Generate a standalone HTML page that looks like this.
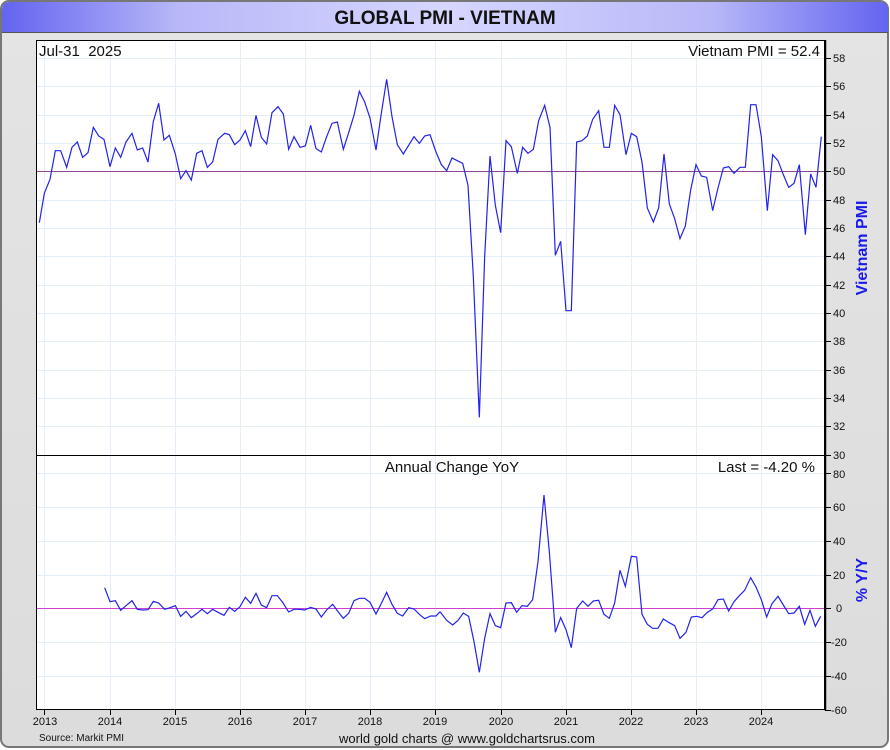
<!DOCTYPE html>
<html><head><meta charset="utf-8"><style>
html,body{margin:0;padding:0;width:890px;height:750px;overflow:hidden;background:#fff;}
</style></head><body>
<svg width="890" height="750" xmlns="http://www.w3.org/2000/svg" font-family="Liberation Sans, sans-serif">
<defs>
<linearGradient id="hd" x1="0" x2="1" y1="0" y2="0">
<stop offset="0" stop-color="#6464f0"/><stop offset="0.2" stop-color="#b8b8f8"/><stop offset="0.5" stop-color="#d6d6ff"/><stop offset="0.8" stop-color="#b8b8f8"/><stop offset="1" stop-color="#6464f0"/>
</linearGradient>
<linearGradient id="bg" x1="0" x2="0" y1="0" y2="1">
<stop offset="0" stop-color="#e4e4e4"/><stop offset="1" stop-color="#dcdcdc"/>
</linearGradient>
</defs>
<rect x="1" y="1" width="887" height="746" rx="8" fill="url(#bg)" stroke="#777" stroke-width="2"/>
<path d="M2 32 V10 Q2 2 10 2 H880 Q888 2 888 10 V32 Z" fill="url(#hd)"/>
<line x1="2" y1="32.5" x2="888" y2="32.5" stroke="#555"/>
<text x="445" y="24" text-anchor="middle" font-size="19" font-weight="bold" fill="#111">GLOBAL PMI - VIETNAM</text>
<rect x="36" y="40" width="789" height="670" fill="#fff"/>
<g stroke="#e4eef8" stroke-width="1">
<line x1="44.5" y1="40" x2="44.5" y2="710"/><line x1="110.5" y1="40" x2="110.5" y2="710"/><line x1="175.5" y1="40" x2="175.5" y2="710"/><line x1="240.5" y1="40" x2="240.5" y2="710"/><line x1="305.5" y1="40" x2="305.5" y2="710"/><line x1="370.5" y1="40" x2="370.5" y2="710"/><line x1="435.5" y1="40" x2="435.5" y2="710"/><line x1="501.5" y1="40" x2="501.5" y2="710"/><line x1="566.5" y1="40" x2="566.5" y2="710"/><line x1="631.5" y1="40" x2="631.5" y2="710"/><line x1="696.5" y1="40" x2="696.5" y2="710"/><line x1="761.5" y1="40" x2="761.5" y2="710"/>
<line x1="36" y1="58.5" x2="825" y2="58.5"/><line x1="36" y1="86.5" x2="825" y2="86.5"/><line x1="36" y1="115.5" x2="825" y2="115.5"/><line x1="36" y1="143.5" x2="825" y2="143.5"/><line x1="36" y1="200.5" x2="825" y2="200.5"/><line x1="36" y1="228.5" x2="825" y2="228.5"/><line x1="36" y1="256.5" x2="825" y2="256.5"/><line x1="36" y1="285.5" x2="825" y2="285.5"/><line x1="36" y1="313.5" x2="825" y2="313.5"/><line x1="36" y1="341.5" x2="825" y2="341.5"/><line x1="36" y1="370.5" x2="825" y2="370.5"/><line x1="36" y1="398.5" x2="825" y2="398.5"/><line x1="36" y1="426.5" x2="825" y2="426.5"/>
<line x1="36" y1="473.5" x2="825" y2="473.5"/><line x1="36" y1="507.5" x2="825" y2="507.5"/><line x1="36" y1="541.5" x2="825" y2="541.5"/><line x1="36" y1="575.5" x2="825" y2="575.5"/><line x1="36" y1="642.5" x2="825" y2="642.5"/><line x1="36" y1="676.5" x2="825" y2="676.5"/>
</g>
<line x1="36" y1="171.5" x2="825" y2="171.5" stroke="#8a4a90"/>
<line x1="36" y1="608.5" x2="825" y2="608.5" stroke="#d040d0"/>
<g fill="none" stroke="#2222ee" stroke-width="1.2" vector-effect="non-scaling-stroke">
<g transform="translate(36,70) scale(0.33333)"><polyline vector-effect="non-scaling-stroke" points="10,458 25,370 42,328 58,242 74,242 92,292 108,232 124,216 140,262 156,248 172,172 188,198 204,208 222,290 238,234 254,262 270,216 288,190 304,240 320,234 336,276 352,154 368,100 384,210 400,196 418,252 434,326 450,302 466,330 482,250 498,242 514,292 530,276 546,208 566,190 580,194 596,224 612,210 628,182 644,230 660,136 676,202 692,222 708,128 726,110 742,132 758,238 774,200 792,232 808,228 824,166 840,236 856,246 872,200 888,160 904,156 922,238 938,188 954,136 970,64 986,96 1002,144 1020,240 1036,130 1052,28 1068,140 1084,224 1102,252 1118,226 1134,200 1150,220 1166,198 1182,194 1200,246"/></g>
<g transform="translate(430,70) scale(0.33333)"><polyline vector-effect="non-scaling-stroke" points="18,246 34,284 50,302 66,264 82,272 98,280 114,346 130,620 148,1042 164,560 180,258 196,406 212,488 228,212 244,230 262,310 278,232 294,250 310,238 326,152 344,106 360,172 376,556 392,514 408,722 424,722 440,216 456,212 472,198 488,148 506,122 522,232 538,232 554,106 570,134 588,254 604,190 620,200 636,276 652,414 670,456 686,414 702,252 718,402 734,446 750,506 766,468 782,360 798,284 814,318 830,322 848,422 864,354 880,294 896,290 912,310 930,292 946,292 962,104 978,104 994,200 1012,422 1028,254 1044,272 1060,314 1076,352 1092,340 1108,284 1126,494 1142,312 1158,352 1174,200"/></g>
<g transform="translate(36,455) scale(0.33333)"><polyline vector-effect="non-scaling-stroke" points="206,398 222,440 238,437 254,466 270,452 288,437 304,463 320,465 336,464 352,439 368,444 386,463 402,458 418,452 434,484 450,469 466,488 482,476 498,463 514,476 530,463 546,472 564,481 580,457 596,469 612,455 628,427 644,445 660,415 676,450 692,458 708,422 724,422 740,442 758,471 774,463 790,463 806,465 824,457 840,462 856,486 872,465 890,448 906,470 922,490 938,475 954,437 970,430 986,430 1002,442 1020,477 1036,445 1052,412 1068,448 1084,475 1100,483 1118,458 1134,462 1150,478 1166,491 1184,483 1200,483 1212,470"/></g>
<g transform="translate(440,455) scale(0.33333)"><polyline vector-effect="non-scaling-stroke" points="0,470 20,496 38,510 54,496 70,474 86,484 102,560 118,652 134,550 150,476 166,512 182,518 198,444 214,443 230,472 246,452 262,454 278,434 294,320 312,120 328,290 346,532 362,488 378,524 394,578 410,460 428,438 444,454 460,438 476,436 492,478 508,490 524,444 540,346 556,394 574,304 590,306 606,478 622,508 638,520 654,520 670,492 686,502 704,512 720,550 738,532 754,486 770,484 786,488 802,472 818,462 834,434 850,432 866,468 882,440 898,422 914,406 932,368 948,396 964,434 980,486 996,446 1014,424 1030,450 1046,476 1062,474 1078,454 1094,508 1110,466 1126,514 1142,484"/></g>
</g>
<rect x="36.5" y="40.5" width="788" height="669" fill="none" stroke="#000"/>
<line x1="36" y1="455.5" x2="825" y2="455.5" stroke="#000"/>
<line x1="825.5" y1="40" x2="825.5" y2="711" stroke="#000" stroke-width="1.5"/>
<g stroke="#000">
<path d="M825 58.5h6M825 86.5h6M825 115.5h6M825 143.5h6M825 171.5h6M825 200.5h6M825 228.5h6M825 256.5h6M825 285.5h6M825 313.5h6M825 341.5h6M825 370.5h6M825 398.5h6M825 426.5h6M825 455.5h6M825 473.5h6M825 507.5h6M825 541.5h6M825 575.5h6M825 608.5h6M825 642.5h6M825 676.5h6M825 710.5h6"/>
<path d="M44.5 710v5M110.5 710v5M175.5 710v5M240.5 710v5M305.5 710v5M370.5 710v5M435.5 710v5M501.5 710v5M566.5 710v5M631.5 710v5M696.5 710v5M761.5 710v5"/>
</g>
<g font-size="11" fill="#111">
<text x="833" y="62">58</text><text x="833" y="90">56</text><text x="833" y="119">54</text><text x="833" y="147">52</text><text x="833" y="175">50</text><text x="833" y="204">48</text><text x="833" y="232">46</text><text x="833" y="260">44</text><text x="833" y="289">42</text><text x="833" y="317">40</text><text x="833" y="345">38</text><text x="833" y="374">36</text><text x="833" y="402">34</text><text x="833" y="430">32</text><text x="833" y="459">30</text>
<text x="833" y="478">80</text><text x="833" y="511">60</text><text x="833" y="545">40</text><text x="833" y="579">20</text><text x="836" y="612">0</text><text x="831" y="646">-20</text><text x="831" y="680">-40</text><text x="831" y="714">-60</text>
</g>
<text transform="translate(867,248) rotate(-90)" text-anchor="middle" font-size="16" font-weight="bold" fill="#1a1ae8">Vietnam PMI</text>
<text transform="translate(867,580) rotate(-90)" text-anchor="middle" font-size="16" font-weight="bold" fill="#1a1ae8">% Y/Y</text>
<g font-size="11" fill="#111" text-anchor="middle">
<text x="45" y="725">2013</text><text x="110" y="725">2014</text><text x="175" y="725">2015</text><text x="240" y="725">2016</text><text x="305" y="725">2017</text><text x="370" y="725">2018</text><text x="435" y="725">2019</text><text x="501" y="725">2020</text><text x="566" y="725">2021</text><text x="631" y="725">2022</text><text x="696" y="725">2023</text><text x="761" y="725">2024</text>
</g>
<text x="39" y="56" font-size="15" fill="#111">Jul-31&#160; 2025</text>
<text x="820" y="56" font-size="15" fill="#111" text-anchor="end">Vietnam PMI = 52.4</text>
<text x="452" y="472" font-size="15" fill="#111" text-anchor="middle">Annual Change YoY</text>
<text x="815" y="472" font-size="15" fill="#111" text-anchor="end">Last = -4.20 %</text>
<text x="39" y="741" font-size="10" fill="#111">Source: Markit PMI</text>
<text x="467" y="743" font-size="13" fill="#111" text-anchor="middle">world gold charts @ www.goldchartsrus.com</text>
</svg>
</body></html>
